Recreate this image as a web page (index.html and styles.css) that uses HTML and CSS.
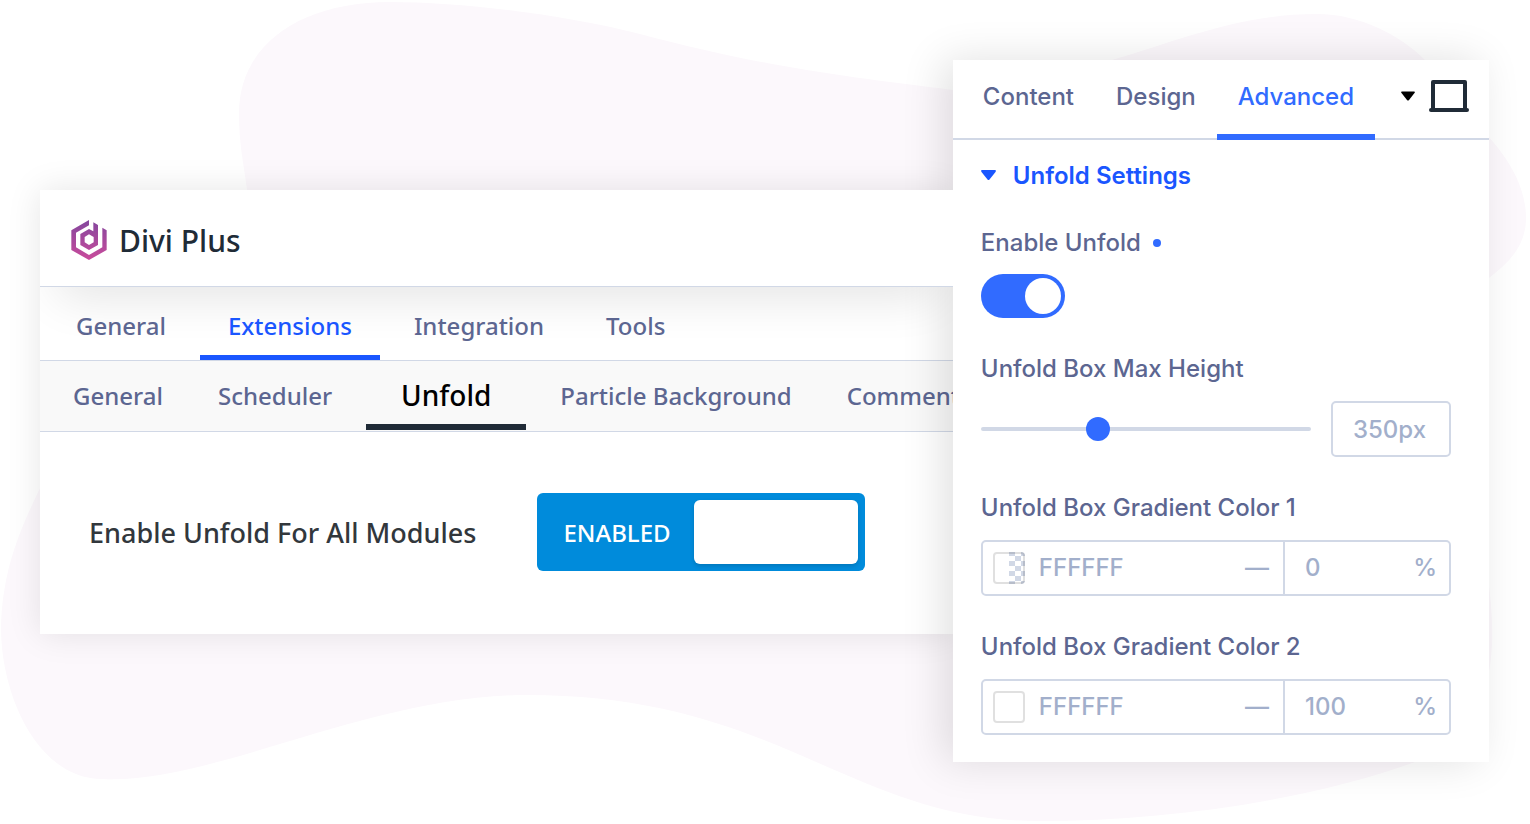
FILE: index.html
```html
<!DOCTYPE html>
<html lang="en">
<head>
  <meta charset="UTF-8">
  <meta name="viewport" content="width=device-width, initial-scale=1">
  <title>Divi Plus - Unfold</title>
  <link rel="stylesheet" href="styles.css">
</head>
<body>

<svg class="blob" viewBox="0 0 1530 824" preserveAspectRatio="none" aria-hidden="true">
  <path d="M390 2C300 2 238 45 239 115C239 145 244 165 247 190C260 400 90 370 40 488C20 530 2 570 1 630C2 700 40 779 102 779C210 785 370 695 527 695C780 695 850 821 1039 821C1170 821 1310 800 1415 762C1600 690 1380 380 1489 278C1510 262 1526 245 1526 218C1526 180 1500 150 1489 137C1465 110 1450 80 1425 60C1400 35 1360 14 1317 14C1240 14 1180 40 1112 60C1030 88 1000 95 953 90C840 76 760 66 640 34C560 14 460 2 390 2Z"/>
</svg>

<div class="page">

  <section class="dashboard">
    <header class="brand">
      <svg class="logo" viewBox="0 0 106 120" aria-hidden="true">
        <defs>
          <linearGradient id="logo-fill" x1="0" y1="0" x2="0" y2="120" gradientUnits="userSpaceOnUse">
            <stop offset="0" stop-color="#84479e"/>
            <stop offset="1" stop-color="#c94b9b"/>
          </linearGradient>
        </defs>
        <path fill="url(#logo-fill)" d="M53 0L0 31V90L53 120L106 90V31L93 23V82L53 105L14 82V38L53 16Z"/>
        <path fill="url(#logo-fill)" fill-rule="evenodd" d="M66 7L80 15V75L53 90L27 75V42L53 27L66 34ZM53 43L40 51V67L53 75L67 67V51Z"/>
      </svg>
      <h1>Divi Plus</h1>
    </header>

    <nav class="tabs">
      <a href="#general">General</a>
      <a href="#extensions" class="active">Extensions</a>
      <a href="#integration">Integration</a>
      <a href="#tools">Tools</a>
    </nav>

    <nav class="subtabs">
      <a href="#ext-general">General</a>
      <a href="#scheduler">Scheduler</a>
      <a href="#unfold" class="active">Unfold</a>
      <a href="#particle">Particle Background</a>
      <a href="#comments">Comments</a>
    </nav>

    <div class="option">
      <label for="enable-all">Enable Unfold For All Modules</label>
      <label class="yes-no" for="enable-all">
        <input type="checkbox" id="enable-all" checked>
        <span class="yes-no-text">ENABLED</span>
        <span class="yes-no-knob"></span>
      </label>
    </div>
  </section>

  <section class="panel">
    <div class="panel-tabs">
      <button type="button">Content</button>
      <button type="button">Design</button>
      <button type="button" class="active">Advanced</button>
      <button type="button" class="device" aria-label="Preview device">
        <svg width="14" height="10" viewBox="0 0 14 10"><path d="M1 0.500H13Q14.500 0.500 13.500 2L8 9Q7 10 6 9L0.500 2Q-0.500 0.500 1 0.500Z" fill="#000"/></svg>
        <svg width="40" height="32" viewBox="0 0 40 32"><path d="M4 30V2H36V30" fill="none" stroke="#202b37" stroke-width="4" stroke-linejoin="round"/><rect y="28" width="40" height="4" rx="2" fill="#202b37"/></svg>
      </button>
    </div>

    <div class="panel-body">
      <h2>
        <svg width="15" height="12" viewBox="0 0 15 12"><path d="M1 0H14Q15.500 0 14.500 2L8.500 9.500Q7.500 10.500 6.500 9.500L0.500 2Q-0.500 0 1 0Z" fill="#1a56ff"/></svg>
        Unfold Settings
      </h2>

      <div class="field">
        <label for="enable-unfold">Enable Unfold <span class="dot"></span></label>
        <input type="checkbox" id="enable-unfold" class="switch" checked>
      </div>

      <div class="field">
        <label for="max-height">Unfold Box Max Height</label>
        <div class="range-row">
          <input type="range" id="max-height" min="10" max="1000" value="350">
          <input type="text" class="range-value" value="350px" aria-label="Max height value">
        </div>
      </div>

      <div class="field">
        <label for="color-1">Unfold Box Gradient Color 1</label>
        <div class="color-row">
          <span class="swatch transparent"></span>
          <input type="text" id="color-1" class="hex" value="FFFFFF">
          <span class="dash">—</span>
          <span class="alpha">
            <input type="text" value="0" aria-label="Color 1 opacity">
            <span>%</span>
          </span>
        </div>
      </div>

      <div class="field">
        <label for="color-2">Unfold Box Gradient Color 2</label>
        <div class="color-row">
          <span class="swatch"></span>
          <input type="text" id="color-2" class="hex" value="FFFFFF">
          <span class="dash">—</span>
          <span class="alpha">
            <input type="text" value="100" aria-label="Color 2 opacity">
            <span>%</span>
          </span>
        </div>
      </div>
    </div>
  </section>

</div>

</body>
</html>
```
FILE: styles.css
```css
* {
  box-sizing: border-box;
}

body {
  margin: 0;
  min-height: 100vh;
  position: relative;
  background: #fff;
  color: #5c6691;
  font-family: "Noto Sans", "Open Sans", sans-serif;
  font-weight: 500;
}

.blob {
  position: absolute;
  inset: 0;
  width: 100%;
  height: 100%;
  fill: #fcf8fc;
}

.page {
  position: relative;
  display: grid;
  grid-template-columns: minmax(0, 63fr) minmax(0, 37fr);
  align-items: start;
  padding: 60px 41px 60px 40px;
}

/* Dashboard card */
.dashboard {
  margin-top: 130px;
  background: #fff;
  overflow: hidden;
  white-space: nowrap;
  box-shadow: 0 0 32px rgba(0, 0, 0, 0.1);
}

.brand {
  display: flex;
  align-items: center;
  gap: 12px;
  height: 97px;
  padding: 4px 31px 0;
  background: #fff;
  border-bottom: 1px solid #d1d8e6;
  position: relative;
  z-index: 1;
  box-shadow: 0 28px 48px -18px rgba(0, 0, 0, 0.11);
}

.logo {
  width: 36px;
  height: 40px;
}

h1 {
  margin: 0;
  font-size: 30px;
  font-weight: 500;
  color: #202b37;
}

.tabs {
  display: flex;
  gap: 6px;
  height: 74px;
  padding-left: 8px;
  border-bottom: 1px solid #d1d8e6;
  position: relative;
}

.tabs a,
.subtabs a {
  color: inherit;
  text-decoration: none;
  font-size: 24px;
}

.tabs a {
  padding: 0 28px;
  line-height: 77px;
  position: relative;
  z-index: 2;
}

.tabs a.active {
  color: #1a56ff;
  border-bottom: 5px solid #1a56ff;
}

.subtabs {
  display: flex;
  gap: 13px;
  height: 71px;
  padding-left: 12px;
  background: #f9f9f9;
  border-bottom: 1px solid #d1d8e6;
}

.subtabs a {
  padding: 0 21px;
  height: 69px;
  line-height: 70px;
}

.subtabs a.active {
  padding: 0 35px;
  color: #000;
  font-size: 28px;
  line-height: 68px;
  border-bottom: 6px solid #202b37;
}

.option {
  display: flex;
  align-items: center;
  padding: 61px 49px 63px;
  font-size: 27px;
  color: #32373c;
}

.option > label:first-child {
  width: 448px;
}

.yes-no {
  position: relative;
  display: flex;
  align-items: center;
  gap: 4px;
  width: 328px;
  height: 78px;
  padding: 7px;
  background: #008bdb;
  border-radius: 6px;
  color: #fff;
  font-size: 24px;
}

.yes-no input {
  position: absolute;
  opacity: 0;
}

.yes-no-text {
  flex: 1;
  text-align: center;
}

.yes-no-knob {
  width: 164px;
  height: 64px;
  background: #fff;
  border-radius: 6px;
  box-shadow: 0 2px 4px rgba(0, 0, 0, 0.15);
}

/* Builder settings panel */
.panel {
  position: relative;
  background: #fff;
  font-family: Inter, sans-serif;
  font-size: 24px;
  box-shadow: -10px 0 40px rgba(0, 0, 0, 0.12);
}

.panel input,
.panel button {
  font: inherit;
  color: inherit;
  background: none;
  border: 0;
  padding: 0;
  margin: 0;
  min-width: 0;
}

.panel-tabs {
  display: flex;
  height: 80px;
  padding: 0 20px 0 9px;
  box-shadow: inset 0 -2px #d1d8e6;
}

.panel .panel-tabs button {
  padding: 0 21px 2px;
  border-bottom: 6px solid transparent;
}

.panel-tabs button.active,
.panel .panel-tabs .active {
  color: #316bff;
  border-color: #316bff;
}

.panel .panel-tabs .device {
  display: flex;
  align-items: center;
  gap: 14px;
  margin-left: auto;
  padding: 0 0 2px;
}

.panel-body {
  padding: 21px 38px 27px 28px;
}

h2 {
  display: flex;
  align-items: center;
  gap: 17px;
  margin: 0 0 37px;
  font-size: 24px;
  line-height: 30px;
  font-weight: 600;
  color: #1a56ff;
}

.field + .field {
  margin-top: 36px;
}

.field > label {
  display: flex;
  align-items: center;
  gap: 12px;
  margin-bottom: 17px;
  line-height: 30px;
}

.field:first-of-type > label {
  margin-bottom: 16px;
}

.dot {
  width: 8px;
  height: 8px;
  border-radius: 50%;
  background: #316bff;
}

.panel .switch {
  appearance: none;
  display: flex;
  justify-content: flex-end;
  width: 84px;
  height: 44px;
  padding: 4px;
  border-radius: 22px;
  background: #316bff;
}

.switch::before {
  content: "";
  width: 36px;
  height: 36px;
  border-radius: 50%;
  background: #fff;
}

.range-row {
  display: flex;
  align-items: center;
  gap: 20px;
  color: #a2afcb;
}

.range-row input[type="range"] {
  appearance: none;
  flex: 1;
  height: 24px;
}

.range-row input::-webkit-slider-runnable-track {
  height: 4px;
  border-radius: 2px;
  background: #d1d8e6;
}

.range-row input::-webkit-slider-thumb {
  appearance: none;
  width: 24px;
  height: 24px;
  margin-top: -10px;
  border-radius: 50%;
  background: #316bff;
}

.panel .range-value {
  width: 120px;
  height: 56px;
  padding-right: 3px;
  text-align: center;
  border: 2px solid #d1d8e6;
  border-radius: 5px;
}

.color-row {
  display: flex;
  align-items: center;
  height: 56px;
  padding-left: 10px;
  border: 2px solid #d1d8e6;
  border-radius: 5px;
  color: #a2afcb;
}

.swatch {
  flex: none;
  width: 32px;
  height: 32px;
  margin-right: 14px;
  border: 2px solid rgba(0, 0, 0, 0.12);
  border-radius: 4px;
}

.swatch.transparent {
  background: linear-gradient(90deg, #fff 50%, transparent 50%) border-box,
    repeating-conic-gradient(#d1d8e6 0 25%, #fff 0 50%) 4px -6px / 12px 10px border-box;
}

.panel .hex {
  flex: 1;
  padding-bottom: 2px;
}

.dash {
  margin-right: 14px;
  padding-bottom: 2px;
}

.alpha {
  display: flex;
  align-items: center;
  justify-content: space-between;
  width: 166px;
  height: 100%;
  padding: 0 12px 2px 20px;
  border-left: 2px solid #d1d8e6;
}

.alpha input {
  width: 80px;
}
```
